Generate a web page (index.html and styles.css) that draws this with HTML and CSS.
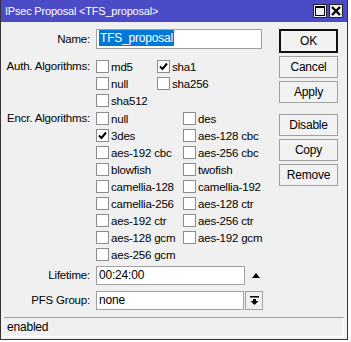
FILE: index.html
```html
<!DOCTYPE html>
<html lang="en">
<head>
  <meta charset="UTF-8">
  <title>IPsec Proposal</title>
  <link rel="stylesheet" href="styles.css">
</head>
<body>
  <div class="window">
    <div class="titlebar">
      <span class="title">IPsec Proposal &lt;TFS_proposal&gt;</span>
      <span class="tbtn">
        <svg width="10" height="10" viewBox="0 0 10 10"><rect x="0.5" y="0.5" width="9" height="9" fill="none" stroke="#000"/><line x1="0" y1="1.5" x2="10" y2="1.5" stroke="#000"/></svg>
      </span>
      <span class="tbtn">
        <svg width="10" height="10" viewBox="0 0 10 10"><path d="M1 1 L9 9 M9 1 L1 9" stroke="#000" stroke-width="2.2"/></svg>
      </span>
    </div>

    <div class="content">
      <div class="form">
        <div class="row row-name">
          <label class="lbl">Name:</label>
          <div class="input input-name"><span class="sel">TFS_proposal</span></div>
        </div>

        <div class="row row-auth">
          <label class="lbl">Auth. Algorithms:</label>
          <div class="checks checks-auth">
            <div class="check"><span class="box"></span>md5</div>
            <div class="check"><span class="box"><svg width="11" height="11" viewBox="0 0 11 11"><path d="M2 5.5 L4.5 8 L9 2.5" fill="none" stroke="#000" stroke-width="2"/></svg></span>sha1</div>
            <div class="check"><span class="box"></span>null</div>
            <div class="check"><span class="box"></span>sha256</div>
            <div class="check"><span class="box"></span>sha512</div>
          </div>
        </div>

        <div class="row row-encr">
          <label class="lbl">Encr. Algorithms:</label>
          <div class="checks checks-encr">
            <div class="check"><span class="box"></span>null</div>
            <div class="check"><span class="box"></span>des</div>
            <div class="check"><span class="box"><svg width="11" height="11" viewBox="0 0 11 11"><path d="M2 5.5 L4.5 8 L9 2.5" fill="none" stroke="#000" stroke-width="2"/></svg></span>3des</div>
            <div class="check"><span class="box"></span>aes-128 cbc</div>
            <div class="check"><span class="box"></span>aes-192 cbc</div>
            <div class="check"><span class="box"></span>aes-256 cbc</div>
            <div class="check"><span class="box"></span>blowfish</div>
            <div class="check"><span class="box"></span>twofish</div>
            <div class="check"><span class="box"></span>camellia-128</div>
            <div class="check"><span class="box"></span>camellia-192</div>
            <div class="check"><span class="box"></span>camellia-256</div>
            <div class="check"><span class="box"></span>aes-128 ctr</div>
            <div class="check"><span class="box"></span>aes-192 ctr</div>
            <div class="check"><span class="box"></span>aes-256 ctr</div>
            <div class="check"><span class="box"></span>aes-128 gcm</div>
            <div class="check"><span class="box"></span>aes-192 gcm</div>
            <div class="check"><span class="box"></span>aes-256 gcm</div>
          </div>
        </div>

        <div class="row row-life">
          <label class="lbl">Lifetime:</label>
          <div class="input input-life">00:24:00</div>
          <span class="arrow-up"></span>
        </div>

        <div class="row row-pfs">
          <label class="lbl">PFS Group:</label>
          <div class="input input-pfs">none</div>
          <span class="dropbtn">
            <svg width="9" height="9" viewBox="0 0 9 9"><rect x="0" y="0" width="9" height="1.5" fill="#000"/><path d="M3 3 H6 V5 H8.5 L4.5 9 L0.5 5 H3 Z" fill="#000"/></svg>
          </span>
        </div>
      </div>

      <div class="buttons">
        <div class="btn btn-default">OK</div>
        <div class="btn">Cancel</div>
        <div class="btn">Apply</div>
        <div class="btn btn-group">Disable</div>
        <div class="btn">Copy</div>
        <div class="btn">Remove</div>
      </div>
    </div>

    <div class="status">enabled</div>
  </div>
</body>
</html>
```

FILE: styles.css
```css
body {
  margin: 0;
  background: #fff;
  font-family: 'Liberation Sans', Arial, sans-serif;
  font-size: 11.5px;
  letter-spacing: -0.2px;
  color: #000;
}

.window {
  width: 348px;
  height: 340px;
  box-sizing: border-box;
  background: #f0f0f0;
  border-left: 1px solid #333;
  border-right: 1px solid #333;
  border-bottom: 1px solid #333;
  display: flex;
  flex-direction: column;
}

.titlebar {
  height: 22px;
  background: #4b4bc8;
  color: #fff;
  display: flex;
  align-items: center;
  padding: 0 4px 0 4px;
  flex-shrink: 0;
}

.title {
  flex: 1;
  font-size: 11px;
}

.tbtn {
  width: 14px;
  height: 14px;
  box-sizing: border-box;
  background: #f0f0f0;
  border: 1px solid #222;
  display: flex;
  align-items: center;
  justify-content: center;
  margin-left: 2px;
}

.content {
  display: flex;
  padding-top: 7px;
}

.form {
  flex: 1;
}

.row {
  display: grid;
  grid-template-columns: 89px auto auto;
  column-gap: 6px;
  justify-content: start;
}

.lbl {
  text-align: right;
  line-height: 17px;
}

.row-name .lbl,
.row-life .lbl,
.row-pfs .lbl {
  align-self: center;
}

.input {
  background: #fff;
  border: 1px solid #a0a0a0;
  box-sizing: border-box;
  height: 19px;
  line-height: 17px;
  padding-left: 2px;
  font-size: 12px;
}

.input-name {
  width: 166px;
  height: 20px;
}

.sel {
  background: #0078d7;
  color: #fff;
  padding: 1px 1px;
}

.row-auth {
  margin-top: 9px;
}

.row-encr {
  margin-top: 1px;
}

.checks {
  display: grid;
}

.checks-auth {
  grid-template-columns: 61px auto;
}

.checks-encr {
  grid-template-columns: 87px auto;
}

.check {
  height: 17px;
  display: flex;
  align-items: center;
  white-space: nowrap;
}

.box {
  width: 13px;
  height: 13px;
  box-sizing: border-box;
  background: #fff;
  border: 1px solid #8c8c8c;
  margin-right: 2px;
  display: flex;
  align-items: center;
  justify-content: center;
}

.row-life {
  margin-top: 3px;
}

.input-life {
  width: 149px;
}

.arrow-up {
  align-self: center;
  width: 0;
  height: 0;
  border-left: 4px solid transparent;
  border-right: 4px solid transparent;
  border-bottom: 5px solid #000;
  margin-left: 1px;
}

.row-pfs {
  margin-top: 6px;
}

.row-pfs .dropbtn {
  margin-left: -5px;
}

.input-pfs {
  width: 148px;
}

.dropbtn {
  width: 18px;
  height: 19px;
  box-sizing: border-box;
  border: 1px solid #a0a0a0;
  background: #f0f0f0;
  display: flex;
  align-items: center;
  justify-content: center;
}

.buttons {
  width: 59px;
  margin-right: 9px;
  display: flex;
  flex-direction: column;
  gap: 3px;
}

.btn {
  height: 22px;
  box-sizing: border-box;
  border: 1px solid #a0a0a0;
  background: #f2f2f2;
  display: flex;
  align-items: center;
  justify-content: center;
  font-size: 12px;
}

.btn-default {
  height: 24px;
  border: 2px solid #111;
}

.btn-group {
  margin-top: 8px;
}

.status {
  margin: auto 3px 2px 3px;
  height: 20px;
  box-sizing: border-box;
  border-top: 1px solid #a0a0a0;
  border-right: 1px solid #fff;
  border-bottom: 1px solid #fff;
  padding-left: 3px;
  line-height: 18px;
  font-size: 12px;
}
```
